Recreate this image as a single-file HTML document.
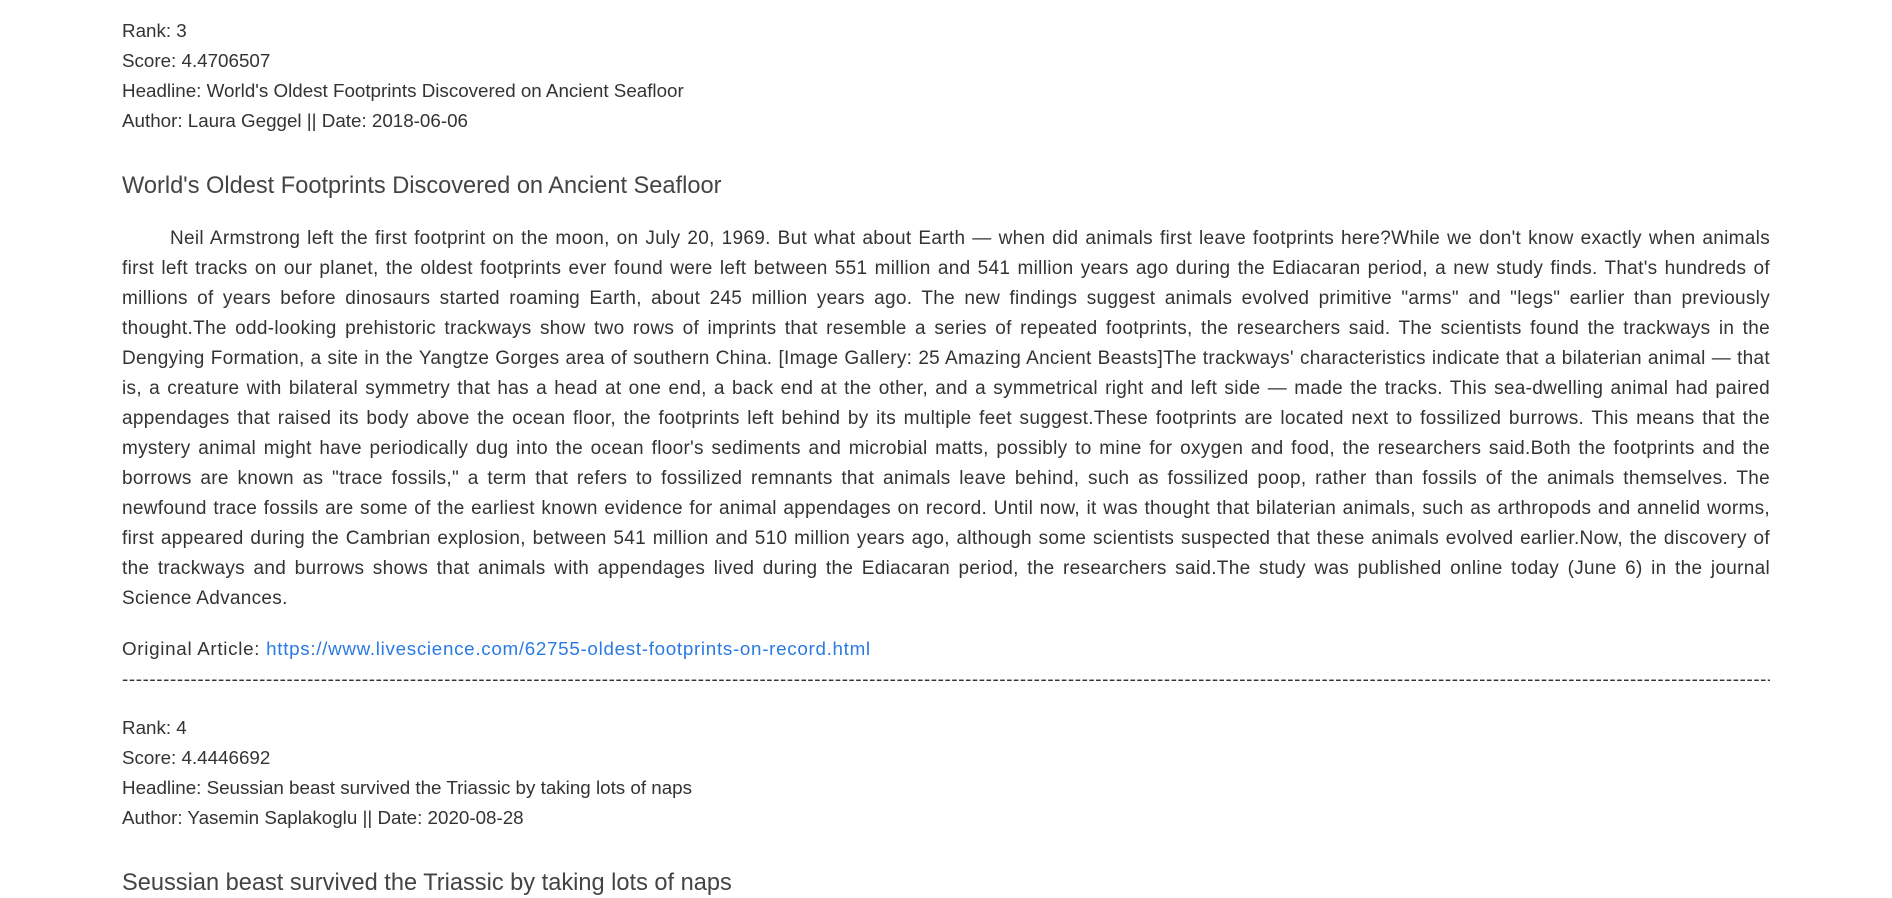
<!DOCTYPE html>
<html><head><meta charset="utf-8"><style>
body{margin:0;background:#fff;color:#333;font-family:"Liberation Sans",sans-serif;font-size:18.8px;width:1892px;height:895px;overflow:hidden;position:relative}
.b{position:absolute;left:122px;width:1648px;line-height:30px}
h2{font-weight:300;font-size:23.6px;margin:0;color:#444;line-height:30px}
.p{font-size:19px;letter-spacing:0.3px}
.p div{text-align:justify;text-align-last:justify;height:30px;overflow:hidden}
.p div.l{text-align-last:left}
a{color:#2a7ae2;text-decoration:none}
.d{white-space:nowrap;overflow:hidden;letter-spacing:0.6px}
</style></head><body>
<div class="b" style="top:16px">Rank: 3<br>Score: 4.4706507<br>Headline: World's Oldest Footprints Discovered on Ancient Seafloor<br>Author: Laura Geggel || Date: 2018-06-06</div>
<div class="b" style="top:171px"><h2>World's Oldest Footprints Discovered on Ancient Seafloor</h2></div>
<div class="b p" style="top:224px">
<div style="padding-left:48px">Neil Armstrong left the first footprint on the moon, on July 20, 1969. But what about Earth — when did animals first leave footprints here?While we don't know exactly when animals</div>
<div>first left tracks on our planet, the oldest footprints ever found were left between 551 million and 541 million years ago during the Ediacaran period, a new study finds. That's hundreds of</div>
<div>millions of years before dinosaurs started roaming Earth, about 245 million years ago. The new findings suggest animals evolved primitive "arms" and "legs" earlier than previously</div>
<div>thought.The odd-looking prehistoric trackways show two rows of imprints that resemble a series of repeated footprints, the researchers said. The scientists found the trackways in the</div>
<div>Dengying Formation, a site in the Yangtze Gorges area of southern China. [Image Gallery: 25 Amazing Ancient Beasts]The trackways' characteristics indicate that a bilaterian animal — that</div>
<div>is, a creature with bilateral symmetry that has a head at one end, a back end at the other, and a symmetrical right and left side — made the tracks. This sea-dwelling animal had paired</div>
<div>appendages that raised its body above the ocean floor, the footprints left behind by its multiple feet suggest.These footprints are located next to fossilized burrows. This means that the</div>
<div>mystery animal might have periodically dug into the ocean floor's sediments and microbial matts, possibly to mine for oxygen and food, the researchers said.Both the footprints and the</div>
<div>borrows are known as "trace fossils," a term that refers to fossilized remnants that animals leave behind, such as fossilized poop, rather than fossils of the animals themselves. The</div>
<div>newfound trace fossils are some of the earliest known evidence for animal appendages on record. Until now, it was thought that bilaterian animals, such as arthropods and annelid worms,</div>
<div>first appeared during the Cambrian explosion, between 541 million and 510 million years ago, although some scientists suspected that these animals evolved earlier.Now, the discovery of</div>
<div>the trackways and burrows shows that animals with appendages lived during the Ediacaran period, the researchers said.The study was published online today (June 6) in the journal</div>
<div class="l">Science Advances.</div>
</div>
<div class="b" style="top:634px;letter-spacing:0.7px">Original Article: <a>https://www.livescience.com/62755-oldest-footprints-on-record.html</a></div>
<div class="b d" style="top:664px">------------------------------------------------------------------------------------------------------------------------------------------------------------------------------------------------------------------------------------------------------------------------------------------------------------------------</div>
<div class="b" style="top:713px">Rank: 4<br>Score: 4.4446692<br>Headline: Seussian beast survived the Triassic by taking lots of naps<br>Author: Yasemin Saplakoglu || Date: 2020-08-28</div>
<div class="b" style="top:868px"><h2>Seussian beast survived the Triassic by taking lots of naps</h2></div>
</body></html>
